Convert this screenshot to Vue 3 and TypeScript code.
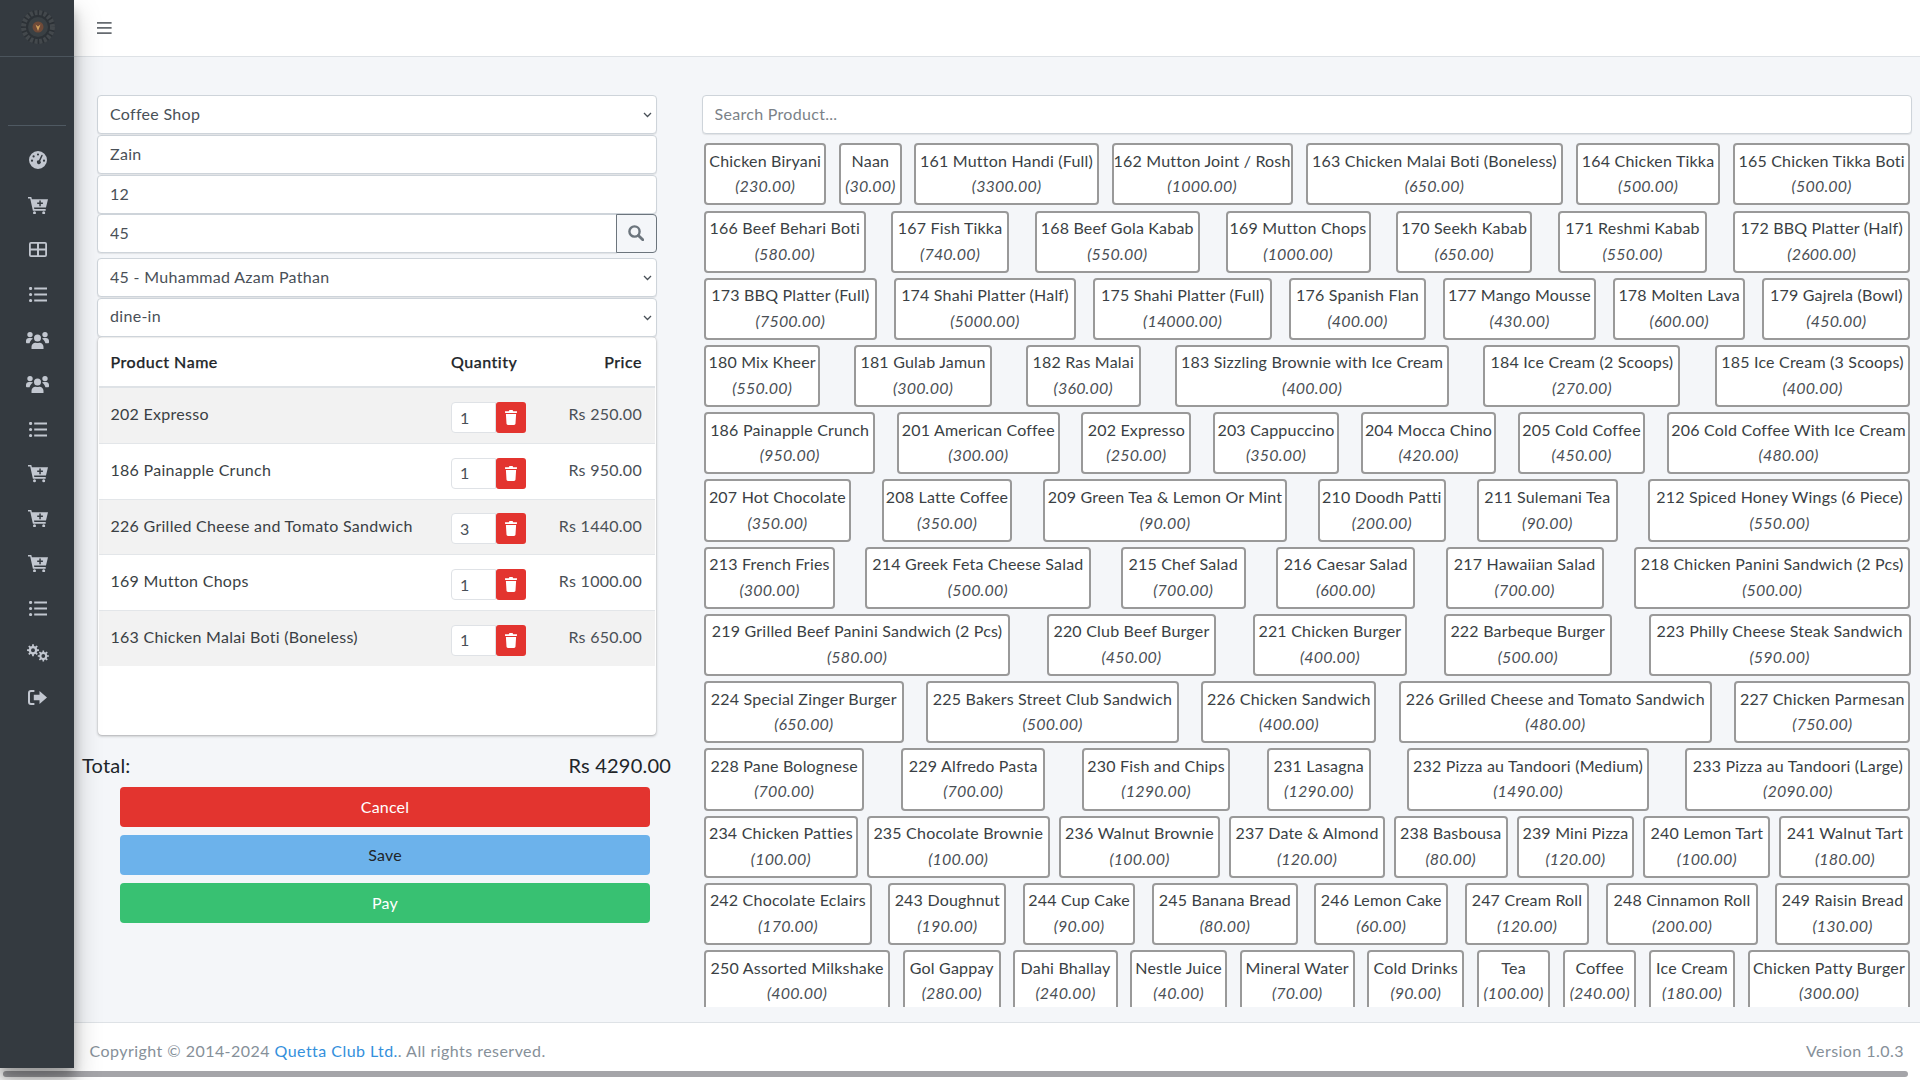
<script setup lang="ts">
type Btn = { n: string; p: string; l: number; r: number }
const S = 1.2245
const raw: [string, string, number, number][][] = [
  [['Chicken Biryani','230.00',575,675],['Naan','30.00',686,737],['161 Mutton Handi (Full)','3300.00',747,897.5],['162 Mutton Joint / Rosh','1000.00',909,1057],['163 Chicken Malai Boti (Boneless)','650.00',1067,1277.5],['164 Chicken Tikka','500.00',1288,1405.5],['165 Chicken Tikka Boti','500.00',1415,1560]],
  [['166 Beef Behari Boti','580.00',575,707],['167 Fish Tikka','740.00',727,823],['168 Beef Gola Kabab','550.00',844,979],['169 Mutton Chops','1000.00',1000,1118.4],['170 Seekh Kabab','650.00',1141,1252],['171 Reshmi Kabab','550.00',1273,1395],['172 BBQ Platter (Half)','2600.00',1415,1560]],
  [['173 BBQ Platter (Full)','7500.00',575,716],['174 Shahi Platter (Half)','5000.00',730,879],['175 Shahi Platter (Full)','14000.00',893,1039],['176 Spanish Flan','400.00',1052,1164],['177 Mango Mousse','430.00',1178,1303],['178 Molten Lava','600.00',1317,1425],['179 Gajrela (Bowl)','450.00',1439,1560]],
  [['180 Mix Kheer','550.00',575,670],['181 Gulab Jamun','300.00',698,810],['182 Ras Malai','360.00',838,932],['183 Sizzling Brownie with Ice Cream','400.00',960,1184],['184 Ice Cream (2 Scoops)','270.00',1212,1373],['185 Ice Cream (3 Scoops)','400.00',1400,1560]],
  [['186 Painapple Crunch','950.00',575,715],['201 American Coffee','300.00',732,865],['202 Expresso','250.00',883,973],['203 Cappuccino','350.00',990,1093],['204 Mocca Chino','420.00',1111,1222],['205 Cold Coffee','450.00',1239,1343],['206 Cold Coffee With Ice Cream','480.00',1361,1560]],
  [['207 Hot Chocolate','350.00',575,695],['208 Latte Coffee','350.00',720,826.7],['209 Green Tea & Lemon Or Mint','90.00',852,1051],['210 Doodh Patti','200.00',1076,1181],['211 Sulemani Tea','90.00',1206,1321],['212 Spiced Honey Wings (6 Piece)','550.00',1346,1560]],
  [['213 French Fries','300.00',575,682],['214 Greek Feta Cheese Salad','500.00',707,891],['215 Chef Salad','700.00',915,1017],['216 Caesar Salad','600.00',1041,1155],['217 Hawaiian Salad','700.00',1180,1309],['218 Chicken Panini Sandwich (2 Pcs)','500.00',1334,1560]],
  [['219 Grilled Beef Panini Sandwich (2 Pcs)','580.00',575,825],['220 Club Beef Burger','450.00',855,993],['221 Chicken Burger','400.00',1023,1149],['222 Barbeque Burger','500.00',1179,1316],['223 Philly Cheese Steak Sandwich','590.00',1346,1560]],
  [['224 Special Zinger Burger','650.00',575,738],['225 Bakers Street Club Sandwich','500.00',756,963],['226 Chicken Sandwich','400.00',981,1124],['226 Grilled Cheese and Tomato Sandwich','480.00',1142,1398],['227 Chicken Parmesan','750.00',1416,1560]],
  [['228 Pane Bolognese','700.00',575,706],['229 Alfredo Pasta','700.00',735,853],['230 Fish and Chips','1290.00',883,1004],['231 Lasagna','1290.00',1034,1119],['232 Pizza au Tandoori (Medium)','1490.00',1149,1346],['233 Pizza au Tandoori (Large)','2090.00',1376,1560]],
  [['234 Chicken Patties','100.00',575,700.5],['235 Chocolate Brownie','100.00',708,857.5],['236 Walnut Brownie','100.00',864,996],['237 Date & Almond','120.00',1004,1131],['238 Basbousa','80.00',1139,1232],['239 Mini Pizza','120.00',1239,1335],['240 Lemon Tart','100.00',1342,1446],['241 Walnut Tart','180.00',1453,1560]],
  [['242 Chocolate Eclairs','170.00',575,712],['243 Doughnut','190.00',726,822],['244 Cup Cake','90.00',835,927],['245 Banana Bread','80.00',941,1060],['246 Lemon Cake','60.00',1074,1183],['247 Cream Roll','120.00',1197,1299],['248 Cinnamon Roll','200.00',1312,1436],['249 Raisin Bread','130.00',1449,1560]],
  [['250 Assorted Milkshake','400.00',575,727],['Gol Gappay','280.00',737,817],['Dahi Bhallay','240.00',827,912],['Nestle Juice','40.00',923,1002],['Mineral Water','70.00',1013,1107],['Cold Drinks','90.00',1117,1196],['Tea','100.00',1206,1266],['Coffee','240.00',1277,1337],['Ice Cream','180.00',1347,1417],['Chicken Patty Burger','300.00',1427,1560]],
]
const rows: Btn[][] = raw.map(r => r.map(([n, p, l, rr]) => ({ n, p, l, r: rr })))
const bw = (b: Btn) => ({ width: ((b.r - b.l) * S).toFixed(1) + 'px' })

const lines = [
  { name: '202 Expresso', qty: 1, price: 'Rs 250.00' },
  { name: '186 Painapple Crunch', qty: 1, price: 'Rs 950.00' },
  { name: '226 Grilled Cheese and Tomato Sandwich', qty: 3, price: 'Rs 1440.00' },
  { name: '169 Mutton Chops', qty: 1, price: 'Rs 1000.00' },
  { name: '163 Chicken Malai Boti (Boneless)', qty: 1, price: 'Rs 650.00' },
]

function gear(cx: number, cy: number, R: number, r: number, hole: number, n: number): string {
  let d = ''
  const step = (Math.PI * 2) / n
  for (let i = 0; i < n; i++) {
    const a = i * step
    const pts: [number, number][] = [
      [r, a - step * 0.5], [r, a - step * 0.28], [R, a - step * 0.18], [R, a + step * 0.18], [r, a + step * 0.28],
    ]
    for (const [rad, t] of pts) {
      d += (i === 0 && t === pts[0][1] ? 'M' : 'L') + (cx + rad * Math.cos(t)).toFixed(2) + ' ' + (cy + rad * Math.sin(t)).toFixed(2)
    }
  }
  d += 'Z'
  d += `M${cx - hole} ${cy}a${hole} ${hole} 0 1 0 ${hole * 2} 0a${hole} ${hole} 0 1 0 ${-hole * 2} 0Z`
  return d
}
const cart = 'M0 0h3.3l.6 2.2H20l-2 8.3H6l.3 1.6h11.4v1.6H4.9L2.2 1.6H0zM11.3 3.4v2.2H9.2v1.5h2.1v2.2h1.5V7.1h2.1V5.6h-2.1V3.4zM6.5 14.3a1.5 1.5 0 1 1 0 3 1.5 1.5 0 0 1 0-3zM15.7 14.3a1.5 1.5 0 1 1 0 3 1.5 1.5 0 0 1 0-3z'
const list = 'M0 1.5a1.6 1.6 0 1 1 3.2 0 1.6 1.6 0 0 1-3.2 0zM0 7.5a1.6 1.6 0 1 1 3.2 0 1.6 1.6 0 0 1-3.2 0zM0 13.5a1.6 1.6 0 1 1 3.2 0 1.6 1.6 0 0 1-3.2 0zM5.2.4H18v2.2H5.2zM5.2 6.4H18v2.2H5.2zM5.2 12.4H18v2.2H5.2z'
const users = 'M11.5 3.6a3.5 3.5 0 1 1 0 7 3.5 3.5 0 0 1 0-7zM5.5 18v-2.2c0-2.4 1.8-4.1 3.9-4.1h.5a4 4 0 0 0 3.2 0h.5c2.1 0 3.9 1.7 3.9 4.1V18zM4 .9a2.7 2.7 0 1 1 0 5.4 2.7 2.7 0 0 1 0-5.4zM19 .9a2.7 2.7 0 1 1 0 5.4 2.7 2.7 0 0 1 0-5.4zM0 11.2V10c0-1.7 1.3-3 3-3h2.2c.7 0 1.3.3 1.8.7-1.8 1-3.1 2.6-3.4 4.6H1.1C.5 12.3 0 11.8 0 11.2zM23 11.2V10c0-1.7-1.3-3-3-3h-2.2c-.7 0-1.3.3-1.8.7 1.8 1 3.1 2.6 3.4 4.6h2.5c.6 0 1.1-.5 1.1-1.1z'
const icons = [
  { w: 18, h: 18, d: 'M9 0a9 9 0 1 1 0 18A9 9 0 0 1 9 0zM9 2.4a1.1 1.1 0 1 0 0 2.2 1.1 1.1 0 0 0 0-2.2zM4.6 4.3a1.1 1.1 0 1 0 0 2.2 1.1 1.1 0 0 0 0-2.2zM3 8.6a1.1 1.1 0 1 0 0 2.2 1.1 1.1 0 0 0 0-2.2zM15 8.6a1.1 1.1 0 1 0 0 2.2 1.1 1.1 0 0 0 0-2.2zM12.3 4.2l-2.4 5.1a1.9 1.9 0 1 0 1.3.6l2.4-5.2a.7.7 0 0 0-1.3-.5z' },
  { w: 20, h: 17.4, d: cart },
  { w: 18, h: 15, d: 'M2 0h14a2 2 0 0 1 2 2v11a2 2 0 0 1-2 2H2a2 2 0 0 1-2-2V2a2 2 0 0 1 2-2zM1.8 1.8v4.8h6.2V1.8zM10 1.8v4.8h6.2V1.8zM1.8 8.4v4.8h6.2V8.4zM10 8.4v4.8h6.2V8.4z' },
  { w: 18, h: 15, d: list },
  { w: 23, h: 18, d: users },
  { w: 23, h: 18, d: users },
  { w: 18, h: 15, d: list },
  { w: 20, h: 17.4, d: cart },
  { w: 20, h: 17.4, d: cart },
  { w: 20, h: 17.4, d: cart },
  { w: 18, h: 15, d: list },
  { w: 22, h: 18, d: gear(6, 6.2, 6, 4.3, 2, 8) + gear(16.3, 12, 5.6, 4, 1.9, 8) },
  { w: 19, h: 15, d: 'M6.4 0H3a3 3 0 0 0-3 3v9a3 3 0 0 0 3 3h3.4v-2H3a1 1 0 0 1-1-1V3a1 1 0 0 1 1-1h3.4zM11.5 1 19 7.5 11.5 14v-3.7H5.8V4.7h5.7z' },
]
</script>

<template>
  <div class="page">
    <div class="shell">
      <aside class="sidebar">
        <div class="brand">
          <svg class="logo" width="36" height="36" viewBox="0 0 36 36">
            <circle cx="18" cy="18" r="17" fill="#2c3136" />
            <circle cx="18" cy="18" r="14.5" fill="none" stroke="#43484c" stroke-width="5" stroke-dasharray="3 1.6" />
            <circle cx="18" cy="18" r="10" fill="#3a4044" />
            <circle cx="18" cy="18" r="5.5" fill="#6f4a38" />
            <path d="M15.5 15.5 18 22l2.5-6.5-2.5 2z" fill="#d3a25c" />
          </svg>
        </div>
        <div class="panel"></div>
        <nav class="nav">
          <a v-for="(ic, i) in icons" :key="i" class="nav-item">
            <svg :width="ic.w" :height="ic.h" :viewBox="`0 0 ${ic.w} ${ic.h}`"><path :d="ic.d" fill="#c2c7d0" fill-rule="evenodd" /></svg>
          </a>
        </nav>
      </aside>
      <div class="wrap">
        <header class="navbar">
          <svg class="burger" width="15" height="12" viewBox="0 0 15 12"><path d="M0 0h14.6v1.7H0zM0 5.1h14.6v1.7H0zM0 10.2h14.6v1.7H0z" fill="#666b70" /></svg>
        </header>
        <main class="main">
          <section class="left">
            <div class="fields">
              <div class="sel">
                <select class="ctl"><option>Coffee Shop</option></select>
                <svg class="chev" width="9" height="6" viewBox="0 0 9 6"><path d="m1 1 3.5 3.5L8 1" fill="none" stroke="#495057" stroke-width="1.3" /></svg>
              </div>
              <input class="ctl txt" value="Zain" />
              <input class="ctl txt" value="12" />
              <div class="group">
                <input class="ctl txt grow" value="45" />
                <button class="find" type="button">
                  <svg width="16" height="16" viewBox="0 0 16 16"><circle cx="6.5" cy="6.5" r="5.1" fill="none" stroke="#6c757d" stroke-width="2.4" /><path d="m10.4 10.4 4.4 4.4" stroke="#6c757d" stroke-width="2.8" stroke-linecap="round" /></svg>
                </button>
              </div>
              <div class="sel">
                <select class="ctl"><option>45 - Muhammad Azam Pathan</option></select>
                <svg class="chev" width="9" height="6" viewBox="0 0 9 6"><path d="m1 1 3.5 3.5L8 1" fill="none" stroke="#495057" stroke-width="1.3" /></svg>
              </div>
              <div class="sel">
                <select class="ctl"><option>dine-in</option></select>
                <svg class="chev" width="9" height="6" viewBox="0 0 9 6"><path d="m1 1 3.5 3.5L8 1" fill="none" stroke="#495057" stroke-width="1.3" /></svg>
              </div>
            </div>
            <div class="card">
              <div class="thead">
                <span class="c-name">Product Name</span>
                <span class="c-qty">Quantity</span>
                <span class="c-price">Price</span>
              </div>
              <div v-for="l in lines" :key="l.name" class="tr">
                <span class="c-name">{{ l.name }}</span>
                <span class="c-qty qty">
                  <input class="qty-in" :value="l.qty" />
                  <button class="trash" type="button">
                    <svg width="12" height="15" viewBox="0 0 12 15"><path d="M.4 1.2h3.4L4.2.4C4.3.2 4.5 0 4.8 0h2.4c.3 0 .5.2.6.4l.4.8h3.4c.2 0 .4.2.4.4v.9c0 .2-.2.4-.4.4H.4c-.2 0-.4-.2-.4-.4v-.9c0-.2.2-.4.4-.4zM.9 4h10.2l-.6 9.6c0 .8-.7 1.4-1.4 1.4H2.9c-.7 0-1.4-.6-1.4-1.4z" fill="#fff" /></svg>
                  </button>
                </span>
                <span class="c-price price">{{ l.price }}</span>
              </div>
            </div>
            <div class="total"><span>Total:</span><span>Rs 4290.00</span></div>
            <div class="actions">
              <button class="act red" type="button">Cancel</button>
              <button class="act blue" type="button">Save</button>
              <button class="act green" type="button">Pay</button>
            </div>
          </section>
          <section class="right">
            <input class="ctl txt search" placeholder="Search Product..." />
            <div class="products">
              <div v-for="(row, i) in rows" :key="i" class="prow">
                <button v-for="b in row" :key="b.n" class="pbtn" type="button" :style="bw(b)">
                  {{ b.n }}<br /><em>({{ b.p }})</em>
                </button>
              </div>
            </div>
          </section>
        </main>
        <footer class="footer">
          <span class="copy">Copyright © 2014-2024 <a class="link">Quetta Club Ltd.</a>. All rights reserved.</span>
          <span class="copy">Version 1.0.3</span>
        </footer>
      </div>
    </div>
    <div class="rail"><div class="thumb"></div></div>
  </div>
</template>

<style>
html, body { margin: 0; overflow: hidden; background: #fff; }
</style>

<style scoped>
.page { width: 1920px; height: 1080px; display: flex; flex-direction: column; overflow: hidden; font-family: "Lato", "Noto Sans", sans-serif; font-size: 16px; line-height: 1.6; color: #212529; letter-spacing: .2px; }
.shell { height: 1068px; display: flex; flex: none; }
.rail { height: 12px; background: #fff; padding: 3px 0 0 3px; box-sizing: border-box; }
.thumb { width: 1905px; height: 6px; background: #a5a5a9; border-radius: 3px; }
.sidebar { width: 74px; flex: none; background: #343a40; position: relative; z-index: 2; box-shadow: 0 14px 28px rgba(0,0,0,.25), 0 10px 10px rgba(0,0,0,.22); }
.brand { height: 56px; border-bottom: 1px solid #4b545c; display: flex; align-items: center; justify-content: center; }
.logo { display: block; margin-left: 1px; margin-top: -2px; }
.panel { height: 68px; margin: 0 8px; border-bottom: 1px solid #4f5962; }
.nav { padding-top: 12px; display: flex; flex-direction: column; }
.nav-item { height: 44.8px; display: flex; align-items: center; justify-content: center; padding-left: 1px; }
.wrap { flex: 1; min-width: 0; display: flex; flex-direction: column; background: #f4f6f9; }
.navbar { height: 56px; background: #fff; border-bottom: 1px solid #dee2e6; display: flex; align-items: center; padding-left: 23px; flex: none; }
.main { flex: 1; min-height: 0; display: flex; padding: 38.3px 0 0 8px; overflow: hidden; }
.left { width: 589px; flex: none; }
.fields { padding: 0 14.5px 0 15px; }
.ctl { display: block; width: 100%; height: 39px; box-sizing: border-box; margin: 0 0 .65px; padding: 0 12px; font: inherit; letter-spacing: .3px; color: #495057; background: #fff; border: 1px solid #ced4da; border-radius: 4px; box-shadow: 0 1px 1px rgba(0,0,0,.08); outline: none; }
.txt { padding-bottom: 2px; }
select.ctl { padding-left: 12px; padding-bottom: 2px; appearance: none; -webkit-appearance: none; }
.sel { position: relative; }
.chev { position: absolute; right: 5px; top: 17px; }
.group { display: flex; margin-bottom: 5.3px; height: 38.4px; }
.group .ctl { height: 38.4px; border-radius: 4px 0 0 4px; margin: 0; }
.grow { flex: 1; min-width: 0; }
.find { width: 41px; flex: none; border: 1px solid #6c757d; background: #f4f6f9; border-radius: 0 4px 4px 0; padding: 0; display: flex; align-items: center; justify-content: center; margin-left: -1px; }
.card { margin: 0 15.5px; height: 398.3px; background: #fff; border-radius: 4px; box-shadow: 0 0 1px rgba(0,0,0,.2), 0 1px 3px rgba(0,0,0,.3); box-sizing: border-box; padding: 0 1px; }
.thead { height: 51.3px; display: flex; align-items: center; border-bottom: 2px solid #dee2e6; box-sizing: border-box; padding: 0 12.5px 1px 12px; color: #212529; }
.thead span { font-weight: 500; letter-spacing: .5px; -webkit-text-stroke: .25px #212529; }
.tr { height: 55.6px; display: flex; align-items: flex-start; box-sizing: border-box; border-bottom: 1px solid #e3e6e9; padding: 13px 12.5px 0 12px; letter-spacing: .28px; }
.tr:nth-child(even) { background: #f2f2f2; }
.tr:last-child { border-bottom: 0; }
.c-name { flex: 1; min-width: 0; }
.c-qty { width: 76px; flex: none; }
.c-price { width: 115px; flex: none; text-align: right; }
.tr .c-name { color: #3a3f44; }
.tr .price { color: #4a5056; }
.qty { display: flex; margin-top: .8px; }
.qty-in { width: 45px; height: 31px; box-sizing: border-box; border: 1px solid #dfe2e6; border-radius: 4px 0 0 4px; background: #fff; font: inherit; color: #495057; padding: 0 8px 1px; outline: none; }
.trash { width: 30px; height: 31px; flex: none; background: #e3342f; border: 0; border-radius: 3px; display: flex; align-items: center; justify-content: center; padding: 0; }
.total { display: flex; justify-content: space-between; font-size: 20px; line-height: 30px; margin-top: 14.5px; color: #212529; }
.actions { margin: 7.5px 21px 0 38px; display: flex; flex-direction: column; gap: 8.5px; }
.act { height: 39.5px; border: 0; border-radius: 4px; font: inherit; letter-spacing: inherit; padding: 0; color: #fff; }
.red { background: #e3342f; }
.blue { background: #6cb2eb; color: #212529; }
.green { background: #38c172; }
.right { width: 1210.5px; margin-left: 30.5px; flex: none; display: flex; flex-direction: column; }
.search { margin: 0; }
.search::placeholder { color: #7b8288; }
.products { margin: 9px 0 0 2.5px; width: 1206.5px; height: 863.4px; overflow: hidden; display: flex; flex-direction: column; gap: 5.1px; }
.prow { display: flex; justify-content: space-between; flex: none; }
.pbtn { flex: none; height: 62.15px; box-sizing: border-box; padding: 0 0 2px; background: #fff; border: 2px solid #999; border-radius: 4px; font: inherit; letter-spacing: inherit; line-height: 25.6px; color: #3a3f44; text-align: center; white-space: nowrap; overflow: visible; }
.pbtn em { color: #4a4f55; }
.footer { height: 46px; flex: none; box-sizing: border-box; background: #fff; border-top: 1px solid #dee2e6; display: flex; justify-content: space-between; align-items: center; padding: 11px 16px 0 15.5px; color: #869099; }
.copy { letter-spacing: .46px; }
.link { color: #3490dc; }
</style>
